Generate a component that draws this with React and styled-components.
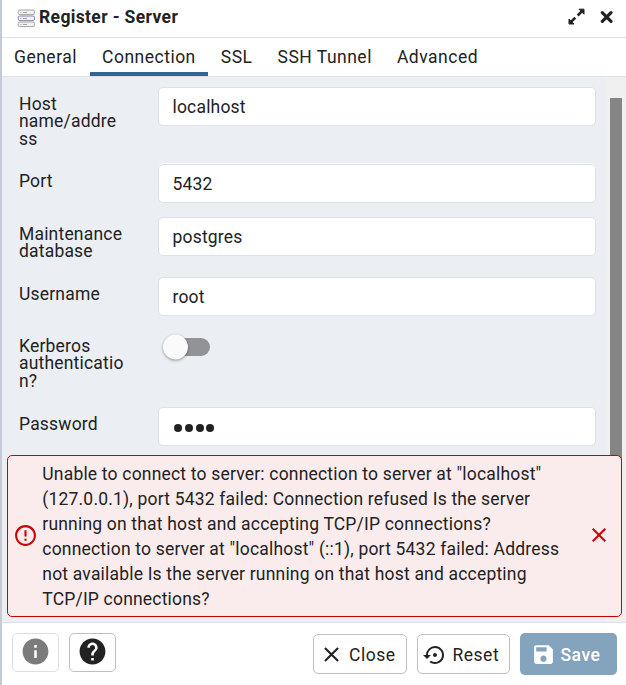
import React from "react";
import styled, { createGlobalStyle } from "styled-components";
import { MdClose, MdErrorOutline, MdHelp, MdInfo, MdSave, MdSettingsBackupRestore } from "react-icons/md";

const GlobalStyle = createGlobalStyle`
  * { box-sizing: border-box; }
  body { margin: 0; background: #fff; font-family: Roboto, sans-serif; color: #222; overflow: hidden; }
  button, input { font: inherit; color: inherit; letter-spacing: inherit; }
`;

const Dialog = styled.div`
  width: 626px;
  height: 685px;
  display: flex;
  flex-direction: column;
  background: #fff;
  border-left: 2px solid #c6cad5;
  font-size: 17.5px;
  letter-spacing: 0.19px;
`;

const TitleBar = styled.header`
  height: 38px;
  flex: none;
  display: flex;
  align-items: center;
  padding: 0 13px 4px 15px;
  border-bottom: 1px solid #dde0e6;
`;

const Title = styled.h1`
  flex: 1;
  margin: 0 0 0 4px;
  font-size: 17.5px;
  font-weight: 700;
  letter-spacing: 0.36px;
`;

const WindowButton = styled.button`
  display: flex;
  padding: 0;
  margin-left: ${(p) => p.$gap || 0}px;
  border: 0;
  background: none;
`;

const Tabs = styled.nav`
  height: 39px;
  flex: none;
  display: flex;
  margin-left: -0.5px;
  border-bottom: 1px solid #dde0e6;
`;

const Tab = styled.button`
  height: 38px;
  padding: 4px 12.5px 0;
  border: 0;
  border-bottom: 4px solid ${(p) => (p.$active ? "#326690" : "transparent")};
  background: none;
  line-height: 30px;
  letter-spacing: 0.5px;
`;

const Body = styled.main`
  position: relative;
  height: 546px;
  flex: none;
  display: flex;
  background: #ebeef3;
  border-bottom: 1px solid #dde0e6;
`;

const Form = styled.div`
  flex: 1;
  padding: 10px 10px 0 17px;
`;

const Field = styled.div`
  display: grid;
  grid-template-columns: 139px 1fr;
  align-items: start;
  height: ${(p) => p.$height}px;
`;

const Label = styled.label`
  padding-top: 8.8px;
  line-height: 17.5px;
  span { display: block; }
`;

const Input = styled.input`
  width: 438px;
  height: 39px;
  padding: 0 13.5px;
  border: 1px solid #dde0e6;
  border-radius: 5px;
  background: #fff;
  box-shadow: ${(p) => (p.$raised ? "0 -1px 0 #fafbfc" : "none")};
  outline: none;
`;

const PasswordBox = styled.div`
  width: 438px;
  height: 39px;
  display: flex;
  align-items: center;
  gap: 2.8px;
  padding: 3px 15px 0;
  border: 1px solid #dde0e6;
  border-radius: 5px;
  background: #fff;
`;

const Dot = styled.i`
  width: 8px;
  height: 8px;
  border-radius: 50%;
  background: #222;
`;

const Switch = styled.div`
  width: 42px;
  height: 18px;
  margin: 9px 0 0 10px;
  border-radius: 9px;
  background: #929396;
`;

const Knob = styled.div`
  width: 25px;
  height: 25px;
  border-radius: 50%;
  background: #fafafa;
  box-shadow: 0 1px 3px rgba(0, 0, 0, 0.4);
  transform: translate(-5px, -3.5px);
`;

const ScrollTrack = styled.div`
  width: 20px;
  padding: 21px 4px 0;
  background: #f0f0f0;
`;

const ScrollThumb = styled.div`
  height: 380px;
  background: #858585;
`;

const Alert = styled.div`
  position: absolute;
  left: 5px;
  top: 378px;
  width: 615px;
  height: 162px;
  display: flex;
  align-items: center;
  padding: 0 10px 2px 5px;
  border: 1px solid #cc0000;
  border-radius: 5px;
  background: #faecec;
`;

const Message = styled.div`
  flex: 1;
  padding: 3px 0 0 4.3px;
  line-height: 25px;
  white-space: nowrap;
  span { display: block; }
`;

const Footer = styled.footer`
  flex: 1;
  display: flex;
  align-items: flex-start;
  padding: 10px 9px 0 10px;
`;

const IconButton = styled.button`
  width: 47px;
  height: 39px;
  margin-right: 10px;
  display: flex;
  align-items: center;
  justify-content: center;
  padding: 0 1px 2px 0;
  border: 1px solid ${(p) => (p.$muted ? "#dcdde6" : "#bbbfcc")};
  border-radius: 5px;
  background: #fff;
  color: ${(p) => (p.$muted ? "#7b7b7b" : "#222")};
`;

const Spacer = styled.div`
  flex: 1;
`;

const Action = styled.button`
  width: ${(p) => p.$width}px;
  height: ${(p) => (p.$primary ? 42 : 40)}px;
  margin: ${(p) => (p.$primary ? "0" : "1px 10px 0 0")};
  display: flex;
  align-items: center;
  padding: 1px 0 0 ${(p) => p.$inset}px;
  gap: ${(p) => p.$gap}px;
  border: ${(p) => (p.$primary ? "0" : "1px solid #bbbfcc")};
  border-radius: 5px;
  background: ${(p) => (p.$primary ? "#84a3bd" : "#fff")};
  color: ${(p) => (p.$primary ? "#fff" : "#222")};
  font-weight: ${(p) => (p.$primary ? 500 : 400)};
  letter-spacing: ${(p) => (p.$primary ? 0.5 : 0.5)}px;
`;

const ServerIconSvg = styled.svg`
  margin-top: 2px;
`;

const ServerIcon = () => (
  <ServerIconSvg width="18" height="20" viewBox="0 0 18 20" fill="#f1f1f1" stroke="#a5a5a5" strokeWidth="1">
    <rect x="1.3" y="2" width="16.2" height="4.6" rx="1.5" />
    <rect x="1.3" y="8" width="16.2" height="4.6" rx="1.5" stroke="#8587ad" />
    <rect x="1.3" y="14" width="16.2" height="4.6" rx="1.5" />
    <path d="M3.5 4.5h1M6 4.5h4M3.5 10.5h1M6 10.5h4M3.5 16.5h1M6 16.5h4" />
  </ServerIconSvg>
);

const ExpandIcon = () => (
  <svg width="17" height="17" viewBox="0 0 17 17" fill="#222" stroke="#222">
    <path d="M11 1.2H16V6.2ZM1 11V16H6Z" strokeWidth="1" strokeLinejoin="round" />
    <path d="M13.5 3.7 9.7 7.5M7.3 9.7 3.3 13.7" strokeWidth="2.6" />
  </svg>
);

const BoldCloseIcon = () => (
  <svg width="13" height="13" viewBox="0 0 13 13" stroke="#222" strokeWidth="3.2" strokeLinecap="round">
    <path d="M2.3 2.6 11 11.3M11 2.6 2.3 11.3" />
  </svg>
);

const FIELDS = [
  { label: ["Host", "name/addre", "ss"], value: "localhost", height: 77 },
  { label: ["Port"], value: "5432", height: 53, raised: true },
  { label: ["Maintenance", "database"], value: "postgres", height: 60 },
  { label: ["Username"], value: "root", height: 52 },
  { label: ["Kerberos", "authenticatio", "n?"], type: "switch", height: 78 },
  { label: ["Password"], type: "password", height: 50 },
];

const MESSAGE = [
  'Unable to connect to server: connection to server at "localhost"',
  "(127.0.0.1), port 5432 failed: Connection refused Is the server",
  "running on that host and accepting TCP/IP connections?",
  'connection to server at "localhost" (::1), port 5432 failed: Address',
  "not available Is the server running on that host and accepting",
  "TCP/IP connections?",
];

function Control({ type, value, raised }) {
  if (type === "switch") return <Switch><Knob /></Switch>;
  if (type === "password") return <PasswordBox><Dot /><Dot /><Dot /><Dot /></PasswordBox>;
  return <Input defaultValue={value} $raised={raised} />;
}

export default function App() {
  return (
    <>
      <GlobalStyle />
      <Dialog>
        <TitleBar>
          <ServerIcon />
          <Title>Register - Server</Title>
          <WindowButton aria-label="Maximize"><ExpandIcon /></WindowButton>
          <WindowButton aria-label="Close dialog" $gap={15}><BoldCloseIcon /></WindowButton>
        </TitleBar>
        <Tabs>
          {["General", "Connection", "SSL", "SSH Tunnel", "Advanced"].map((t) => (
            <Tab key={t} $active={t === "Connection"}>{t}</Tab>
          ))}
        </Tabs>
        <Body>
          <Form>
            {FIELDS.map((f) => (
              <Field key={f.label[0]} $height={f.height}>
                <Label>{f.label.map((l) => <span key={l}>{l}</span>)}</Label>
                <Control type={f.type} value={f.value} raised={f.raised} />
              </Field>
            ))}
          </Form>
          <ScrollTrack><ScrollThumb /></ScrollTrack>
          <Alert role="alert">
            <MdErrorOutline size={25} color="#cc0000" />
            <Message>{MESSAGE.map((m) => <span key={m}>{m}</span>)}</Message>
            <MdClose size={24} color="#cc0000" />
          </Alert>
        </Body>
        <Footer>
          <IconButton $muted aria-label="Info"><MdInfo size={31} /></IconButton>
          <IconButton aria-label="Help"><MdHelp size={31} /></IconButton>
          <Spacer />
          <Action $width={94} $inset={5} $gap={5}><MdClose size={25} />Close</Action>
          <Action $width={93} $inset={5} $gap={5.5}><MdSettingsBackupRestore size={24} />Reset</Action>
          <Action $primary $width={97} $inset={11} $gap={4.5}><MdSave size={25} />Save</Action>
        </Footer>
      </Dialog>
    </>
  );
}
